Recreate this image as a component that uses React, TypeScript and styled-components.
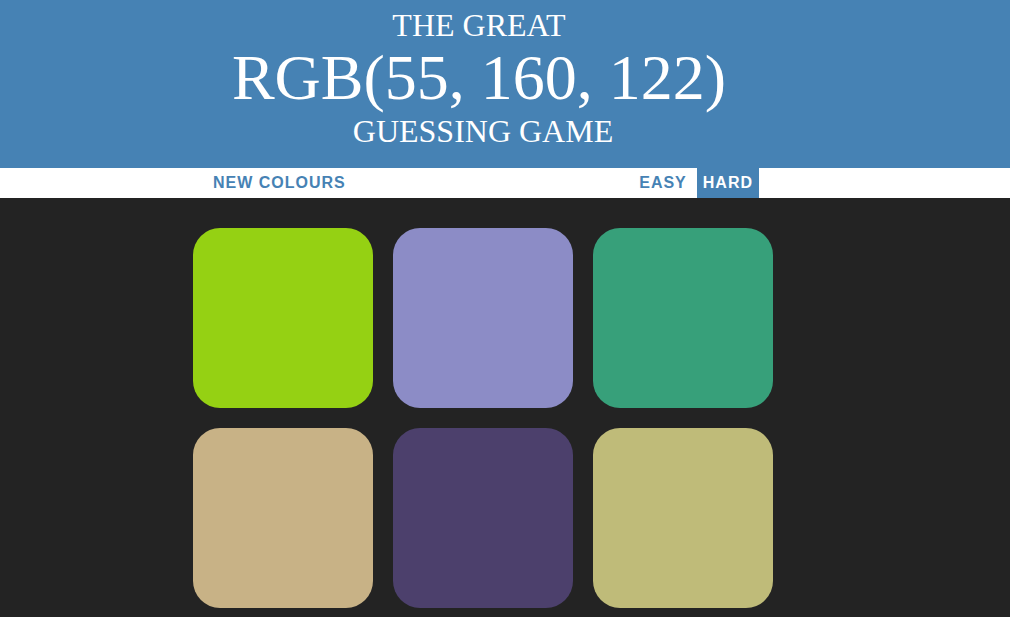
import React from "react";
import styled, { createGlobalStyle } from "styled-components";

const Global = createGlobalStyle`
  html, body { margin: 0; padding: 0; }
  body {
    background: #232323;
    font-family: "Liberation Sans", Arial, sans-serif;
  }
`;

const Header = styled.h1`
  margin: 0;
  padding: 8px 0 19px;
  background: #4682b4;
  color: #ffffff;
  font-family: "Liberation Serif", "Times New Roman", serif;
  font-weight: normal;
  font-size: 32px;
  line-height: 1.1;
  text-transform: uppercase;
`;

const Column = styled.div`
  width: 966px;
  display: flex;
  justify-content: center;
`;

const Titles = styled.div`
  display: flex;
  flex-direction: column;
  align-items: center;
`;

const Line = styled.span<{ $big?: boolean; $trail?: boolean }>`
  display: block;
  font-size: ${(p) => (p.$big ? "64px" : "32px")};
  line-height: 1.1;
  padding-right: ${(p) => (p.$trail ? "8px" : "0")};
`;

const Stripe = styled.div`
  background: #ffffff;
  height: 30px;
`;

const StripeInner = styled.div`
  width: 600px;
  height: 30px;
  box-sizing: border-box;
  padding: 0 24px;
  display: flex;
  align-items: stretch;
  gap: 4px;
`;

const Button = styled.button<{ $selected?: boolean }>`
  border: none;
  margin: 0;
  padding: 1px 6px;
  height: 100%;
  background: ${(p) => (p.$selected ? "#4682b4" : "#ffffff")};
  color: ${(p) => (p.$selected ? "#ffffff" : "#4682b4")};
  font-family: "Liberation Sans", Arial, sans-serif;
  font-weight: 700;
  font-size: 16px;
  letter-spacing: 1px;
  text-transform: uppercase;
  cursor: pointer;
  outline: none;
`;

const Message = styled.span`
  flex: 1;
`;

const Grid = styled.div`
  width: 600px;
  margin-top: 20px;
  display: grid;
  grid-template-columns: repeat(3, 180px);
  grid-auto-rows: 180px;
  gap: 20px;
  padding: 10px;
  box-sizing: border-box;
`;

const Square = styled.div<{ $color: string }>`
  background: ${(p) => p.$color};
  border-radius: 15%;
`;

const colours = [
  "rgb(149, 209, 19)",
  "rgb(140, 140, 198)",
  "rgb(55, 160, 122)",
  "rgb(200, 178, 134)",
  "rgb(76, 64, 108)",
  "rgb(191, 187, 121)",
];

export default function App() {
  return (
    <>
      <Global />
      <Header>
        <Column>
          <Titles>
            <Line $trail>The Great</Line>
            <Line $big $trail>RGB(55, 160, 122)</Line>
            <Line>Guessing Game</Line>
          </Titles>
        </Column>
      </Header>
      <Stripe>
        <Column>
          <StripeInner>
            <Button>New Colours</Button>
            <Message />
            <Button>Easy</Button>
            <Button $selected>Hard</Button>
          </StripeInner>
        </Column>
      </Stripe>
      <Column>
        <Grid>
          {colours.map((c, i) => (
            <Square key={i} $color={c} />
          ))}
        </Grid>
      </Column>
    </>
  );
}
